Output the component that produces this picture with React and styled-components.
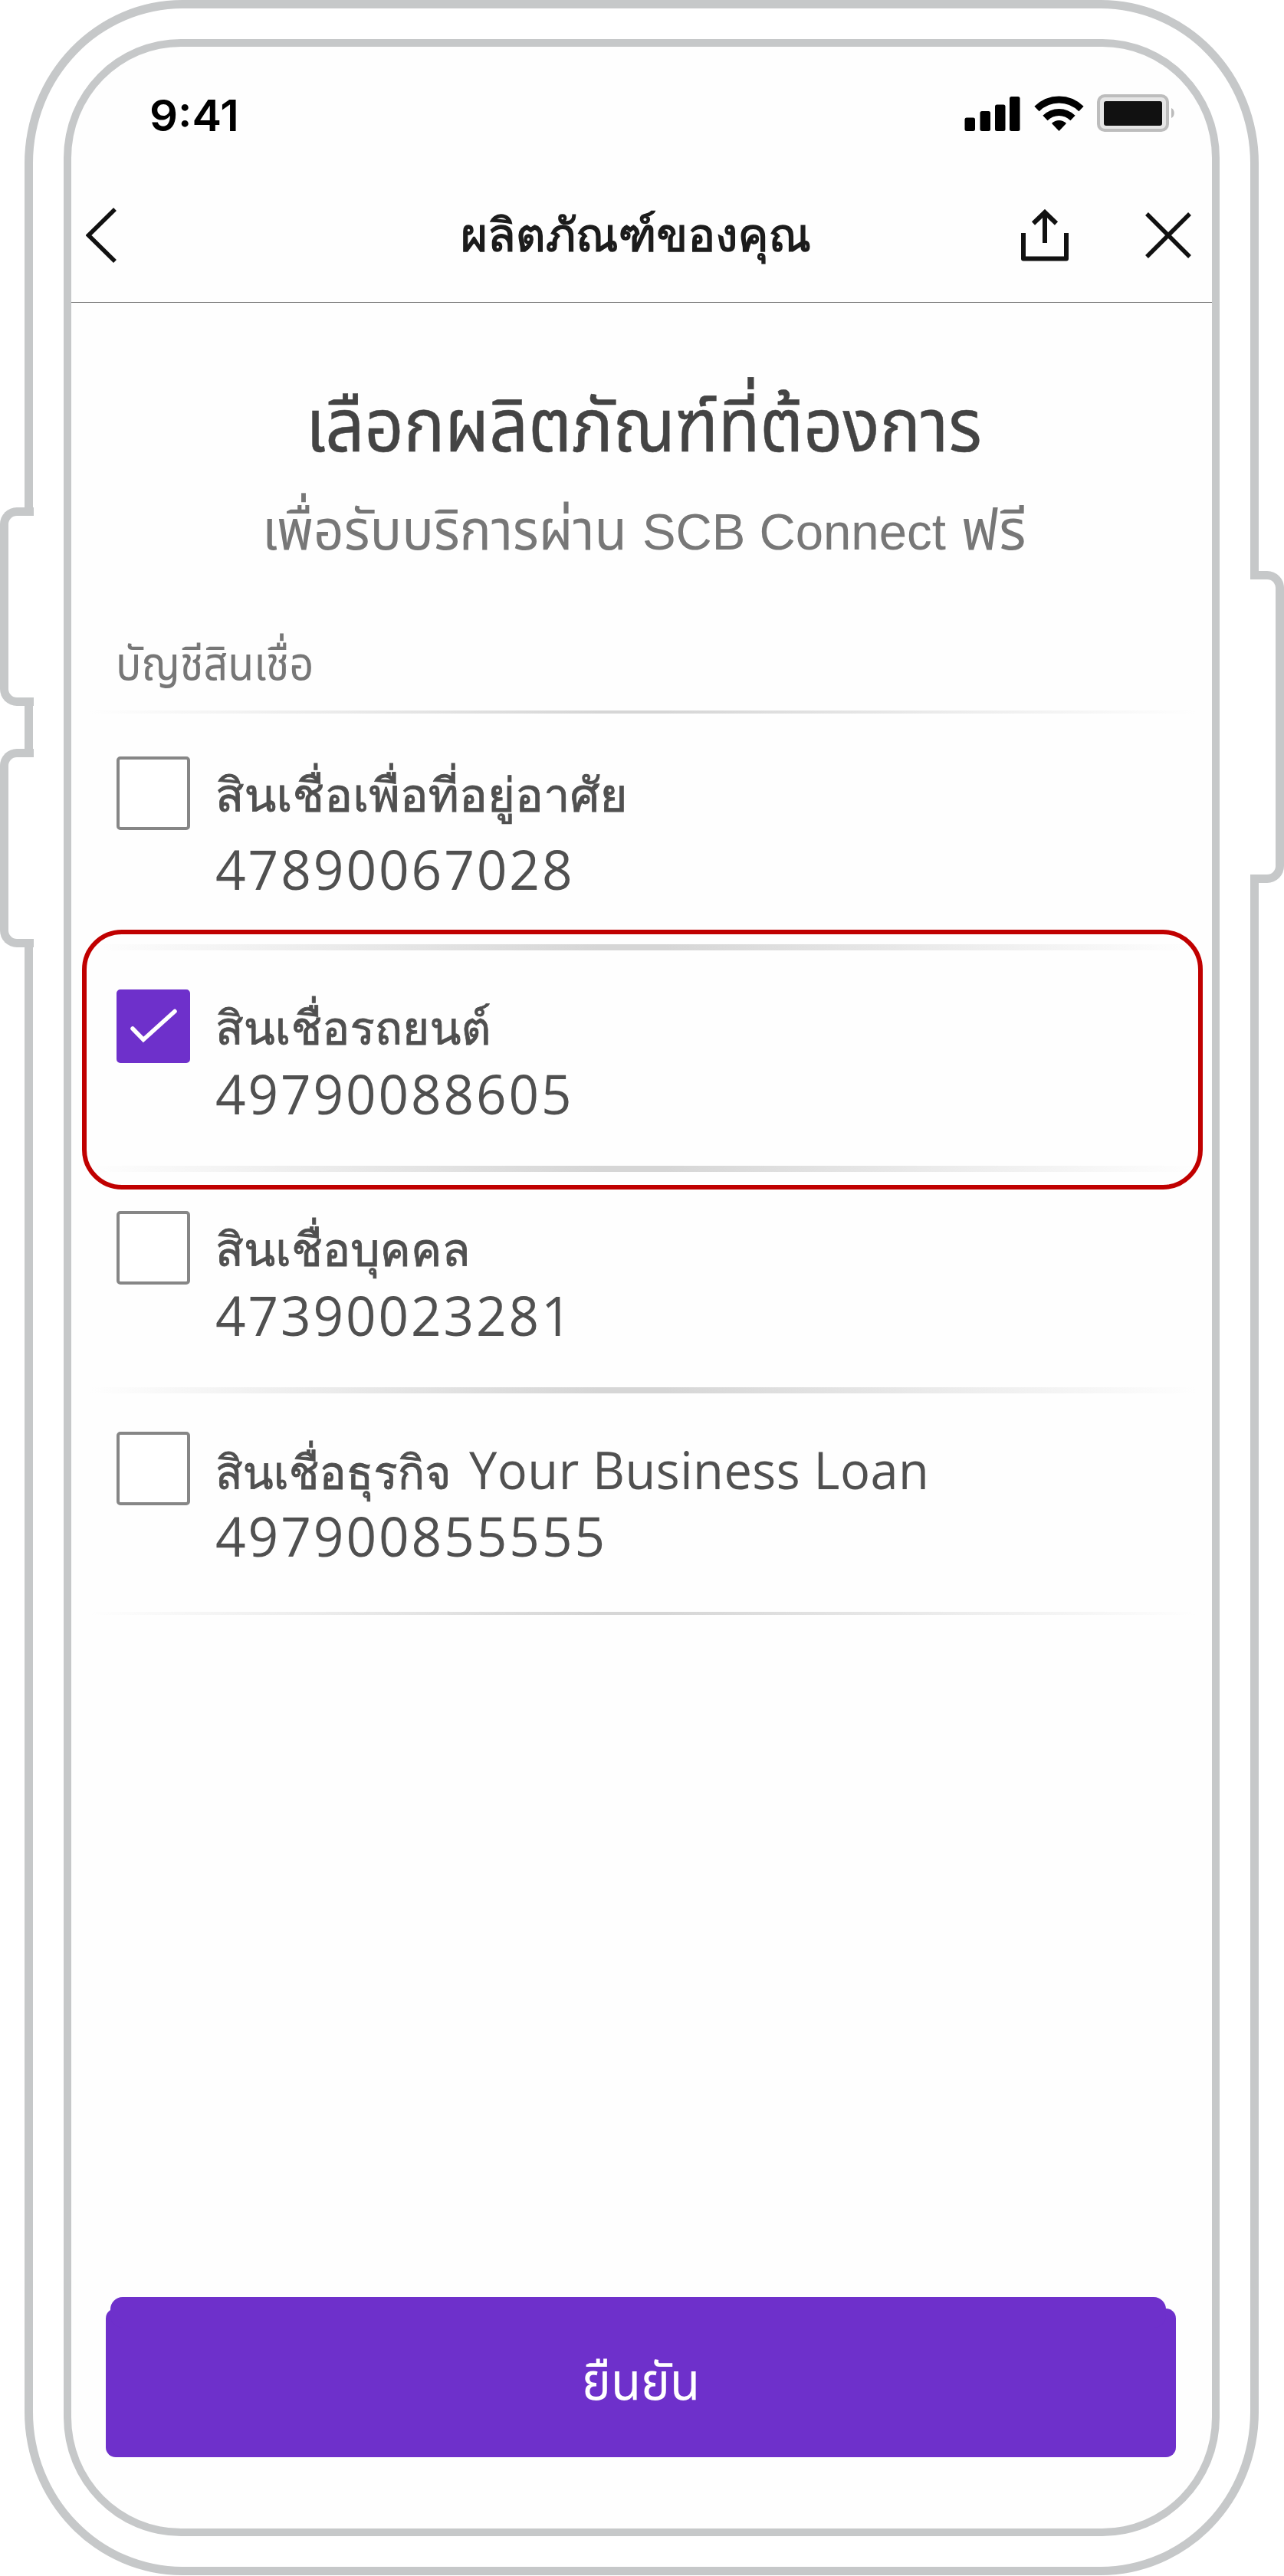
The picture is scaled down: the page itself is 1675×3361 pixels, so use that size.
import React, { useLayoutEffect, useRef, useState } from "react";
import styled, { createGlobalStyle, css } from "styled-components";

const looped = '"Open Sans", Loma, sans-serif';
const loopless = '"Noto Sans Thai", "Liberation Sans", sans-serif';
const latin = '"Liberation Sans", Arial, sans-serif';
const frameGrey = "#c6c8c9";
const purple = "#6e30cb";

const GlobalStyle = createGlobalStyle`
  *, *::before, *::after { box-sizing: border-box; }
  body { margin: 0; background: #fff; }
`;

const Stage = styled.main`
  position: relative;
  width: 1675px;
  height: 3361px;
  padding-left: 32px;
  overflow: hidden;
`;

const Phone = styled.div`
  width: 1610px;
  height: 3360px;
  padding: 40px;
  border: 11px solid ${frameGrey};
  border-radius: 206px / 213px;
`;

const Screen = styled.div`
  display: flex;
  flex-direction: column;
  height: 3258px;
  border: 10px solid ${frameGrey};
  border-radius: 153px / 155px;
  background: #fefefe;
`;

const SideKey = styled.div`
  position: absolute;
  top: ${(p) => p.$top}px;
  width: 44px;
  height: ${(p) => p.$height}px;
  background: #fff;
  border: 11px solid ${frameGrey};
  ${(p) =>
    p.$side === "left"
      ? css`
          left: 0;
          border-right: 0;
          border-radius: 22px 0 0 22px;
        `
      : css`
          left: 1631px;
          border-left: 0;
          border-radius: 0 22px 22px 0;
        `}
`;

const StatusBar = styled.div`
  display: flex;
  align-items: flex-start;
  height: 171px;
  padding: 62px 48px 0 102px;
`;

const StatusIcons = styled.div`
  display: flex;
  gap: 17px;
  margin-left: auto;
`;

const NavBar = styled.header`
  display: flex;
  align-items: center;
  height: 163px;
  padding: 0 27px 12px 19px;
  border-bottom: 1px solid #707070;
`;

const NavTitle = styled.div`
  margin: -4px 0 0 449px;
`;

const NavActions = styled.div`
  display: flex;
  align-items: center;
  gap: 100px;
  margin-left: auto;
`;

const Hero = styled.section`
  display: flex;
  flex-direction: column;
  align-items: center;
  height: 414px;
  padding: 117px 0 0 6px;
`;

const Subtitle = styled.div`
  display: flex;
  align-items: baseline;
  gap: 20px;
  margin-top: 50px;
`;

const SectionLabel = styled.div`
  height: 118px;
  padding: 30px 0 0 58px;
`;

const Divider = styled.div`
  height: ${(p) => p.$weight}px;
  margin: 0 20px 0 24px;
  background: linear-gradient(
    90deg,
    rgba(214, 214, 214, 0) 0%,
    rgba(214, 214, 214, 0.3) 14%,
    rgba(214, 214, 214, 1) 46%,
    rgba(214, 214, 214, 1) 52%,
    rgba(214, 214, 214, 0.4) 80%,
    rgba(214, 214, 214, 0) 100%
  );
`;

const Item = styled.div`
  position: relative;
  display: flex;
  align-items: flex-start;
  gap: 33px;
  height: ${(p) => p.$height}px;
  padding: ${(p) => p.$pad}px 0 0 59px;
`;

const Highlight = styled.div`
  position: absolute;
  top: -27px;
  left: 14px;
  width: 1462px;
  height: 339px;
  border: 6px solid #c00000;
  border-radius: 52px;
`;

const Box = styled.div`
  display: flex;
  align-items: center;
  justify-content: center;
  width: 96px;
  height: 96px;
  border: 4px solid ${(p) => (p.$checked ? purple : "#868686")};
  border-radius: 5px;
  background: ${(p) => (p.$checked ? purple : "#fff")};
`;

const Copy = styled.div`
  display: flex;
  flex-direction: column;
  gap: ${(p) => p.$gap}px;
  padding-top: 14px;
`;

const NameLine = styled.div`
  display: flex;
  align-items: baseline;
  gap: 23px;
`;

const Footer = styled.footer`
  margin: auto 0 93px 45px;
`;

const Confirm = styled.div`
  position: relative;
  display: flex;
  justify-content: center;
  width: 1396px;
  height: 194px;
  padding-top: 65px;
  border-radius: 13px;
  background: ${purple};

  &::before {
    content: "";
    position: absolute;
    top: -15px;
    left: 6px;
    right: 13px;
    height: 40px;
    border-radius: 16px;
    background: ${purple};
  }
`;

const FitBox = styled.span`
  position: relative;
  display: block;
  width: ${(p) => p.$width}px;
  font-family: ${(p) => p.$font};
  font-size: ${(p) => p.$size}px;
  line-height: ${(p) => p.$line || p.$size}px;
  white-space: nowrap;
`;

const FitInk = styled.span`
  display: inline-block;
  transform-origin: 0 50%;
  color: ${(p) => p.$color};
  font-weight: ${(p) => p.$weight || 400};
  letter-spacing: ${(p) => p.$spacing || 0}px;
  -webkit-text-stroke: ${(p) => p.$stroke || 0}px ${(p) => p.$color};
`;

function Fit({ width, size, line, font, color, weight, stroke, spacing, children }) {
  const ink = useRef(null);
  const [scale, setScale] = useState(1);
  useLayoutEffect(() => {
    setScale(width / ink.current.offsetWidth);
  }, [width]);
  return (
    <FitBox $width={width} $size={size} $line={line} $font={font}>
      <FitInk
        ref={ink}
        $color={color}
        $weight={weight}
        $stroke={stroke}
        $spacing={spacing}
        style={{ transform: `scaleX(${scale})` }}
      >
        {children}
      </FitInk>
    </FitBox>
  );
}

const Signal = () => (
  <svg width="74" height="49" viewBox="0 0 74 49">
    <rect x="0.500" y="30.500" width="13.500" height="17.500" rx="2.500" />
    <rect x="20.500" y="22" width="13.500" height="26" rx="2.500" />
    <rect x="40" y="13.500" width="13.500" height="34.500" rx="2.500" />
    <rect x="59" y="3" width="13.500" height="45" rx="2.500" />
  </svg>
);

const Wifi = () => (
  <svg width="65" height="49" viewBox="0 0 65 49" fill="none" stroke="#000" strokeWidth="9">
    <path d="M3.500 19C20 3 45 3 61.500 19" />
    <path d="M14.500 31C25 21 40 21 50.500 31" />
    <path d="M23 38C28.500 32.500 36.500 32.500 42 38L32.500 48Z" fill="#000" stroke="none" />
  </svg>
);

const Battery = () => (
  <svg width="102" height="49" viewBox="0 0 102 49">
    <rect x="2" y="2" width="90" height="45" rx="8" fill="#e6e6e6" stroke="#bdbdbd" strokeWidth="4" />
    <rect x="9" y="9" width="76" height="32" rx="3" fill="#111" />
    <path d="M97 18C102 20 102 29 97 31Z" fill="#bbb" />
  </svg>
);

const Back = () => (
  <svg width="40" height="72" viewBox="0 0 40 72" fill="none" stroke="#111" strokeWidth="5.500">
    <path d="M38 2L3.500 36L38 70" />
  </svg>
);

const Share = () => (
  <svg width="62" height="68" viewBox="0 0 62 68" fill="none" stroke="#111" strokeWidth="6">
    <path d="M3 31V64.500H59V31" strokeLinejoin="round" />
    <path d="M31 44V3M16 18.500L31 4L46 18.500" />
  </svg>
);

const Close = () => (
  <svg width="60" height="60" viewBox="0 0 60 60" stroke="#111" strokeWidth="5.500">
    <path d="M2 2L58 58M58 2L2 58" />
  </svg>
);

const Tick = () => (
  <svg width="64" height="48" viewBox="0 0 64 48" fill="none" stroke="#fff" strokeWidth="5.500" strokeLinecap="round">
    <path d="M5 27L19 41.500L60 4.500" />
  </svg>
);

const accounts = [
  { name: "สินเชื่อเพื่อที่อยู่อาศัย", nameW: 537, no: "47890067028", noW: 469, h: 301, pad: 56, gap: 27 },
  { name: "สินเชื่อรถยนต์", nameW: 360, no: "49790088605", noW: 468, h: 281, pad: 51, gap: 16, checked: true },
  { name: "สินเชื่อบุคคล", nameW: 333, no: "47390023281", noW: 468, h: 281, pad: 51, gap: 16 },
  { name: "สินเชื่อธุรกิจ", nameW: 308, extra: "Your Business Loan", no: "497900855555", noW: 511, h: 285, pad: 50, gap: 13 },
];
const rules = [8, 8, 8, 4];

function Account({ name, nameW, extra, no, noW, h, pad, gap, checked }) {
  return (
    <Item $height={h} $pad={pad}>
      {checked && <Highlight />}
      <Box $checked={checked}>{checked && <Tick />}</Box>
      <Copy $gap={gap}>
        <NameLine>
          <Fit width={nameW} size={61} line={70} font={looped} color="#505050" stroke={0.8}>{name}</Fit>
          {extra && <Fit width={600} size={67} line={70} font={looped} color="#505050" spacing={0.5}>{extra}</Fit>}
        </NameLine>
        <Fit width={noW} size={71} font={looped} color="#505050" spacing={3}>{no}</Fit>
      </Copy>
    </Item>
  );
}

export default function App() {
  return (
    <Stage>
      <GlobalStyle />
      <Phone>
        <Screen>
          <StatusBar>
            <Fit width={117} size={56} font="Inter, sans-serif" color="#000" weight={600}>9:41</Fit>
            <StatusIcons>
              <Signal />
              <Wifi />
              <Battery />
            </StatusIcons>
          </StatusBar>
          <NavBar>
            <Back />
            <NavTitle>
              <Fit width={457} size={60} font={looped} color="#1c1c1c" stroke={1.5}>ผลิตภัณฑ์ของคุณ</Fit>
            </NavTitle>
            <NavActions>
              <Share />
              <Close />
            </NavActions>
          </NavBar>
          <Hero>
            <Fit width={882} size={96} font={loopless} color="#444" stroke={0.5}>เลือกผลิตภัณฑ์ที่ต้องการ</Fit>
            <Subtitle>
              <Fit width={476} size={73} font={loopless} color="#777">เพื่อรับบริการผ่าน</Fit>
              <Fit width={396} size={66} line={73} font={latin} color="#777">SCB Connect</Fit>
              <Fit width={84} size={73} font={loopless} color="#777">ฟรี</Fit>
            </Subtitle>
          </Hero>
          <SectionLabel>
            <Fit width={258} size={60} font={loopless} color="#777">บัญชีสินเชื่อ</Fit>
          </SectionLabel>
          <Divider $weight={4} />
          {accounts.map((a, i) => (
            <React.Fragment key={a.no}>
              <Account {...a} />
              <Divider $weight={rules[i]} />
            </React.Fragment>
          ))}
          <Footer>
            <Confirm>
              <Fit width={154} size={68} font={loopless} color="#fff">ยืนยัน</Fit>
            </Confirm>
          </Footer>
        </Screen>
      </Phone>
      <SideKey $side="left" $top={662} $height={259} />
      <SideKey $side="left" $top={977} $height={259} />
      <SideKey $side="right" $top={745} $height={407} />
    </Stage>
  );
}
